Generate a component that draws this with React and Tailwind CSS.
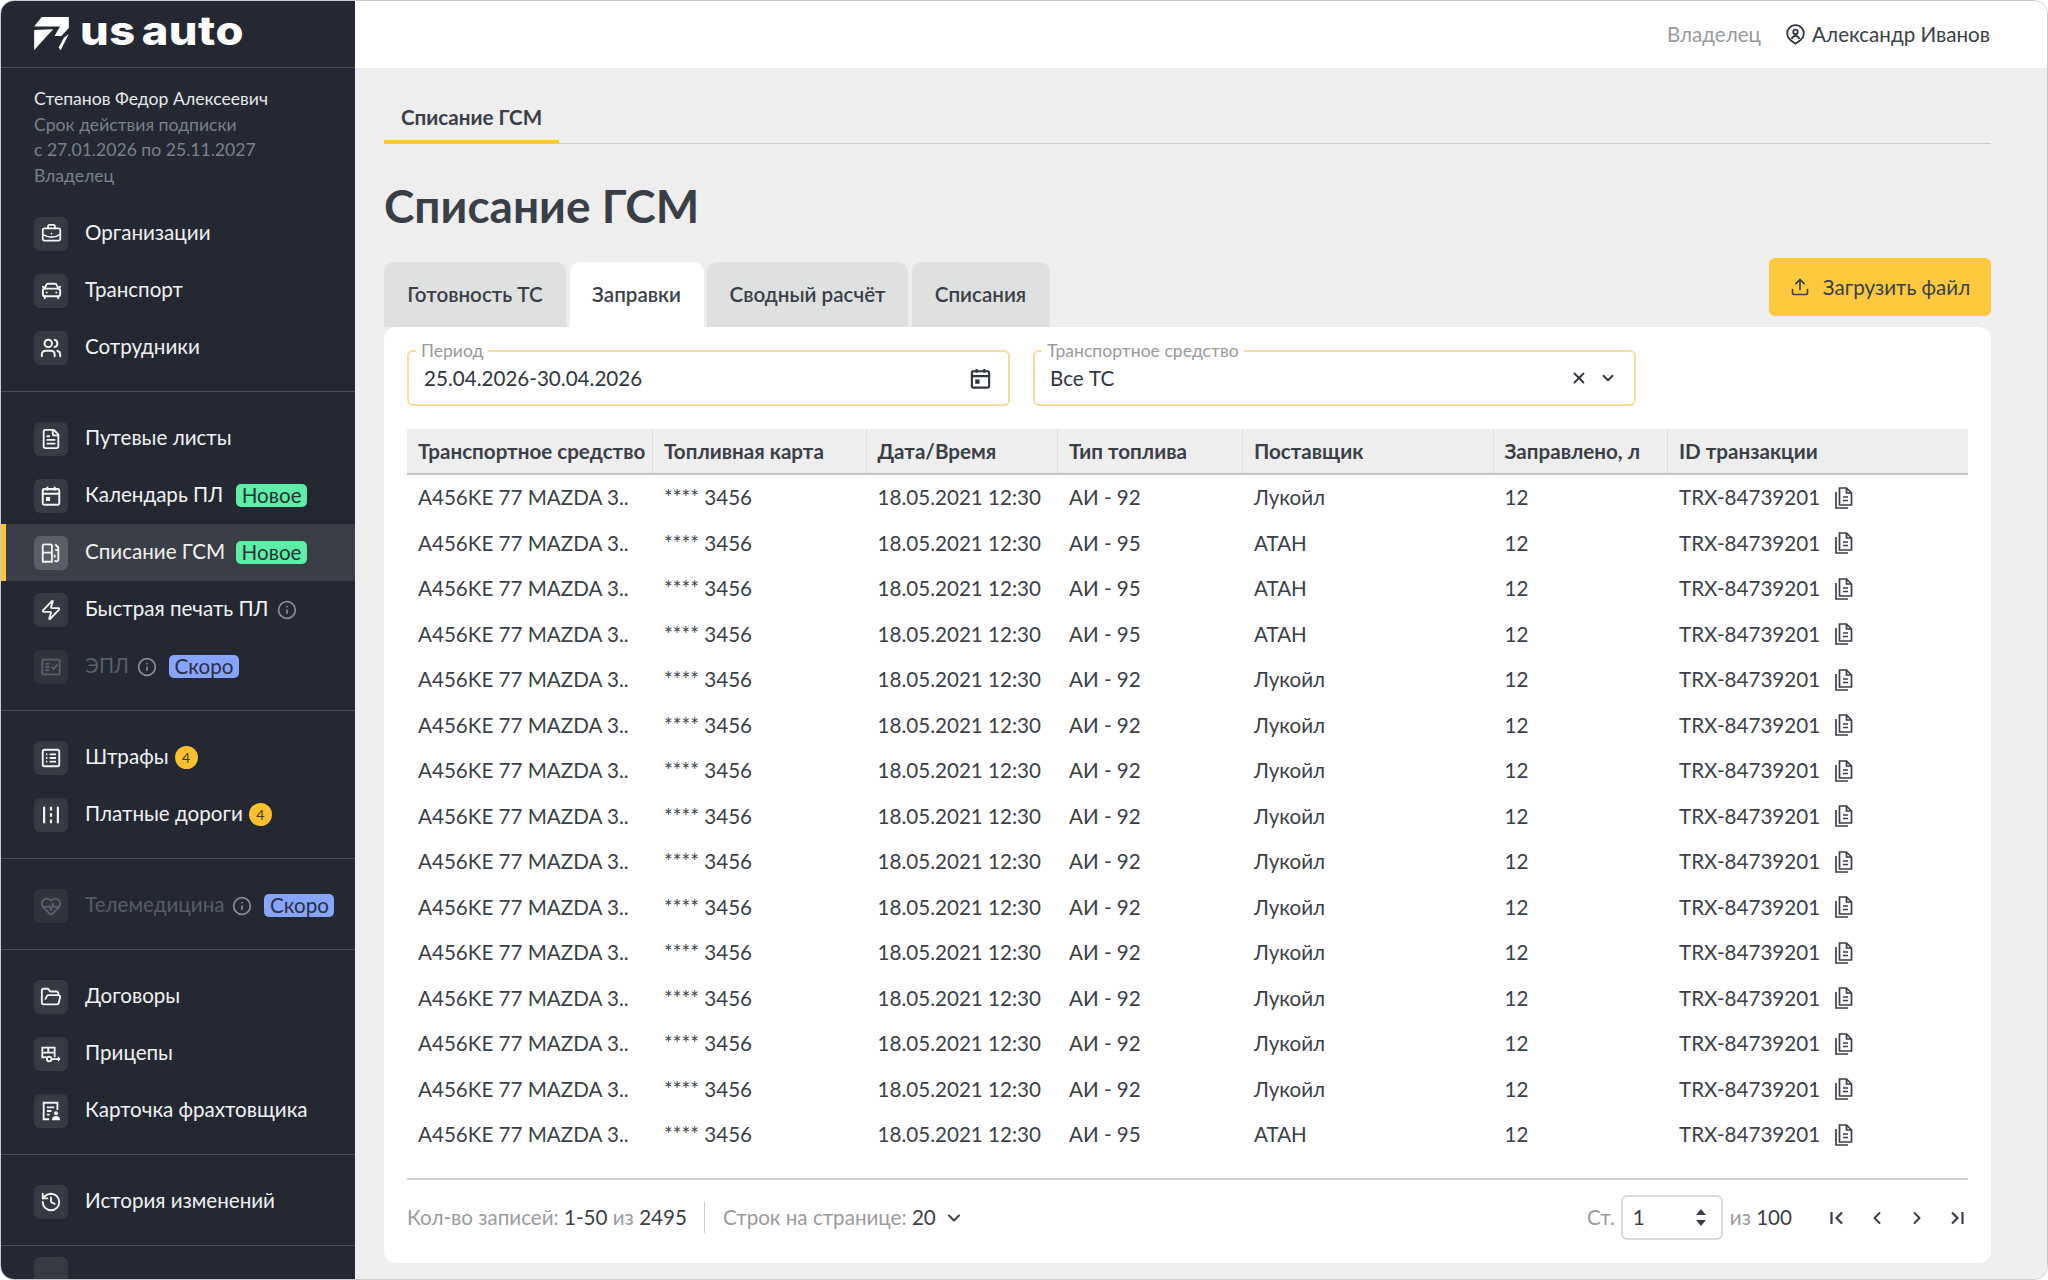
import {
  BriefcaseBusiness,
  CarFront,
  Users,
  FileText,
  Zap,
  HeartPulse,
  FolderOpen,
  History,
  Info,
  X,
  ChevronDown,
  ChevronLeft,
  ChevronRight,
  Upload,
} from "lucide-react";

const font = { fontFamily: '"Lato", "Noto Sans", sans-serif' };

const CalendarIcon = ({ className = "w-[22px] h-[22px]" }) => (
  <svg viewBox="0 0 24 24" className={className} fill="none" stroke="currentColor" strokeWidth="2.2">
    <rect x="3" y="4.5" width="18" height="17" rx="1.5" />
    <path d="M3 9.5h18M8 2v4M16 2v4" />
    <rect x="6.5" y="13" width="4.5" height="4.5" fill="currentColor" stroke="none" />
  </svg>
);

const FuelIcon = () => (
  <svg viewBox="0 0 24 24" className="w-[22px] h-[22px]" fill="none" stroke="currentColor" strokeWidth="2">
    <path d="M3 21.5V4a1.500 1.500 0 0 1 1.500-1.500h7A1.500 1.500 0 0 1 13 4v17.500zM3 11.500h10" />
    <path d="M16.500 2.500l3.500 3.500v13a2.200 2.200 0 0 1-4 1.200M16.500 8.500H20M16 14v3" />
  </svg>
);

const EplIcon = () => (
  <svg viewBox="0 0 24 24" className="w-[22px] h-[22px]" fill="none" stroke="currentColor" strokeWidth="2">
    <rect x="2.500" y="4" width="19" height="16" rx="1" />
    <path d="M6 8.500h4M6 12h4M6 15.500h4M13 12l2 2 4-4.500" />
  </svg>
);

const ListIcon = () => (
  <svg viewBox="0 0 24 24" className="w-[22px] h-[22px]" fill="none" stroke="currentColor" strokeWidth="2">
    <rect x="3" y="3" width="18" height="18" rx="2" />
    <path d="M10.500 8h7M10.500 12h7M10.500 16h7M6.500 8h1.500M6.500 12h1.500M6.500 16h1.500" />
  </svg>
);

const RoadIcon = () => (
  <svg viewBox="0 0 24 24" className="w-[22px] h-[22px]" fill="none" stroke="currentColor" strokeWidth="2.400">
    <path d="M4.500 3v18M19.500 3v18M12 3v4M12 10v4M12 17v4" />
  </svg>
);

const TrailerIcon = () => (
  <svg viewBox="0 0 24 24" className="w-[22px] h-[22px]" fill="none" stroke="currentColor" strokeWidth="2">
    <path d="M16 15.500V5H2.500v10.500H7M2.500 10.500H16M9 5v5.500" />
    <circle cx="10" cy="17.500" r="2.500" />
    <path d="M13 17.500h7" />
    <path d="M19.500 14.500l3 3-3 3z" fill="currentColor" stroke="none" />
  </svg>
);

const CardIcon = () => (
  <svg viewBox="0 0 24 24" className="w-[22px] h-[22px]" fill="none" stroke="currentColor" strokeWidth="2">
    <path d="M10 21H4V3h15v8M7.500 8h8M7.500 12h5M7.500 16h3" />
    <circle cx="17.500" cy="14.500" r="2.200" fill="currentColor" stroke="none" />
    <path d="M13 22c0-3 2-4.500 4.500-4.500S22 19 22 22z" fill="currentColor" stroke="none" />
  </svg>
);

const CopyIcon = () => (
  <svg viewBox="0 0 20 24" className="w-[21px] h-[24px] text-[#3a3f47]" fill="none" stroke="currentColor" strokeWidth="1.700">
    <path d="M6 2h7l5 5v12H6zM13 2v5h5" />
    <path d="M9.500 11h5M9.500 14.500h5" />
    <path d="M2.500 6v16h12" />
  </svg>
);

const PinUser = () => (
  <svg viewBox="0 0 24 24" className="w-[21px] h-[23px] text-[#2f343c]" fill="none" stroke="currentColor" strokeWidth="2">
    <path d="M12 22.500 6.500 18.500A9.500 9.500 0 1 1 17.500 18.500z" />
    <circle cx="12" cy="9" r="2.600" />
    <path d="M7.500 17c1-2.500 2.500-3.500 4.500-3.500s3.500 1 4.500 3.500" />
  </svg>
);

const FirstIcon = () => (
  <svg viewBox="0 0 20 20" className="w-5 h-5" fill="none" stroke="currentColor" strokeWidth="2.200">
    <path d="M4.500 4v12M15 4.500 9.500 10l5.500 5.500" />
  </svg>
);

const LastIcon = () => (
  <svg viewBox="0 0 20 20" className="w-5 h-5" fill="none" stroke="currentColor" strokeWidth="2.200">
    <path d="M15.500 4v12M5 4.500 10.500 10 5 15.500" />
  </svg>
);

const Logo = () => (
  <div className="flex items-center pl-[33px] h-full">
    <svg viewBox="0 0 102 100" className="w-[35px] h-[34px] shrink-0 text-white" fill="currentColor">
      <path d="M22 0H102V32L80 56H60L76 28H0z" />
      <path d="M0 38 56 36 12 84 0 98z" />
      <path d="M88 60 102 50 78 98 72 90z" />
    </svg>
    <span
      className="ml-[11px] text-white text-[40px] leading-none font-extrabold tracking-[0.5px] [word-spacing:-4px] -mt-[6px] scale-x-[1.13] origin-left"
      style={{ fontFamily: '"Inter", sans-serif' }}
    >
      us auto
    </span>
  </div>
);

const NewBadge = ({ ml = "ml-[13px]" }) => (
  <span className={`${ml} h-[23px] w-[71px] rounded-[5px] bg-[#5cefa6] text-[#2a3039] text-[20.6px] leading-[23px] text-center`}>
    Новое
  </span>
);

const SoonBadge = () => (
  <span className="ml-[12px] h-[23px] w-[70px] rounded-[5px] bg-[#85a5ff] text-[#2a3040] text-[20.6px] leading-[23px] text-center">
    Скоро
  </span>
);

const Count = () => (
  <span className="ml-[6px] w-[23px] h-[23px] rounded-full bg-[#fcc02e] text-[#3a3a2a] text-[14px] leading-[23px] text-center">
    4
  </span>
);

const NavItem = ({ icon, label, active, disabled, children }) => (
  <div
    className={`flex items-center h-[57px] ${
      active ? "bg-[#3a3f47] border-l-[5px] border-[#fcc537] pl-[28px]" : "pl-[33px]"
    }`}
  >
    <div
      className={`w-[34px] h-[34px] rounded-[6px] flex items-center justify-center shrink-0 ${
        disabled ? "text-[#5b606a] bg-[#2f343d]" : active ? "bg-[#5a5e65] text-[#f4f4f4]" : "bg-[#353a43] text-[#f4f4f4]"
      }`}
    >
      {icon}
    </div>
    <span className={`ml-[17px] -mt-[2px] text-[20.6px] leading-none ${disabled ? "text-[#585d67]" : "text-[#f2f2f2]"}`}>
      {label}
    </span>
    {children}
  </div>
);

const InfoMark = ({ ml = "ml-[8px]", color = "text-[#8a8e96]" }) => (
  <Info className={`${ml} w-[20px] h-[20px] ${color}`} strokeWidth={2} />
);

const Group = ({ children }) => (
  <div className="pt-[18px] pb-[15px] border-b border-[#4b505a]">{children}</div>
);

const Sidebar = () => (
  <aside className="w-[354px] shrink-0 bg-[#232833] flex flex-col overflow-hidden">
    <div className="h-[67px] border-b border-[#4b505a] shrink-0">
      <Logo />
    </div>
    <div className="pb-[15px] border-b border-[#4b505a] shrink-0">
      <div className="pt-[18px] pl-[33px] mb-[17px] text-[17.6px] leading-[25.5px] text-[#7c818a]">
        <div className="text-[#e8e9ea]">Степанов Федор Алексеевич</div>
        <div>Срок действия подписки</div>
        <div>с 27.01.2026 по 25.11.2027</div>
        <div>Владелец</div>
      </div>
      <NavItem icon={<BriefcaseBusiness size={21} strokeWidth={2} />} label="Организации" />
      <NavItem icon={<CarFront size={23} strokeWidth={2} />} label="Транспорт" />
      <NavItem icon={<Users size={22} strokeWidth={2.2} />} label="Сотрудники" />
    </div>
    <Group>
      <NavItem icon={<FileText size={22} strokeWidth={2} />} label="Путевые листы" />
      <NavItem icon={<CalendarIcon />} label="Календарь ПЛ">
        <NewBadge />
      </NavItem>
      <NavItem icon={<FuelIcon />} label="Списание ГСМ" active>
        <NewBadge ml="ml-[11px]" />
      </NavItem>
      <NavItem icon={<Zap size={22} strokeWidth={2} />} label="Быстрая печать ПЛ">
        <InfoMark />
      </NavItem>
      <NavItem icon={<EplIcon />} label="ЭПЛ" disabled>
        <InfoMark ml="ml-[8px]" />
        <SoonBadge />
      </NavItem>
    </Group>
    <Group>
      <NavItem icon={<ListIcon />} label="Штрафы">
        <Count />
      </NavItem>
      <NavItem icon={<RoadIcon />} label="Платные дороги">
        <Count />
      </NavItem>
    </Group>
    <Group>
      <NavItem icon={<HeartPulse size={22} strokeWidth={2} />} label="Телемедицина" disabled>
        <InfoMark ml="ml-[8px]" />
        <SoonBadge />
      </NavItem>
    </Group>
    <Group>
      <NavItem icon={<FolderOpen size={22} strokeWidth={2} />} label="Договоры" />
      <NavItem icon={<TrailerIcon />} label="Прицепы" />
      <NavItem icon={<CardIcon />} label="Карточка фрахтовщика" />
    </Group>
    <Group>
      <NavItem icon={<History size={22} strokeWidth={2} />} label="История изменений" />
    </Group>
    <div className="pt-[11px] pl-[33px]">
      <div className="w-[34px] h-[34px] rounded-[6px] bg-[#353a43]" />
    </div>
  </aside>
);

const columns = [
  "Транспортное средство",
  "Топливная карта",
  "Дата/Время",
  "Тип топлива",
  "Поставщик",
  "Заправлено, л",
  "ID транзакции",
];

const gridCols = "grid grid-cols-[245px_213.5px_191.5px_185px_250.5px_174.5px_301px]";

const fuels = [92, 95, 95, 95, 92, 92, 92, 92, 92, 92, 92, 92, 92, 92, 95];

const Field = ({ label, children }) => (
  <div className="relative w-[603px] h-[56px] rounded-[6px] border-2 border-[#f5dd9c] flex items-center pl-[15px] pr-[17px] text-[20.6px] text-[#30353d]">
    <span className="absolute left-[7px] -top-[11px] bg-white px-[5px] text-[17.6px] leading-[20px] text-[#9a9a9a]">
      {label}
    </span>
    {children}
  </div>
);

const Table = () => (
  <div className="mt-[23px]">
    <div className={`${gridCols} h-[46px] bg-[#eeeeee] border-b-2 border-[#c3c5c7] text-[20.6px] font-bold text-[#3a3f47]`}>
      {columns.map((c, i) => (
        <div key={c} className={`flex items-center pl-[11px] whitespace-nowrap ${i > 0 ? "border-l border-[#dddddd]" : ""}`}>
          {c}
        </div>
      ))}
    </div>
    {fuels.map((f, i) => (
      <div key={i} className={`${gridCols} h-[45.5px] items-center text-[20.6px] text-[#3a3f47]`}>
        <div className="pl-[11px] whitespace-nowrap">A456KE 77 MAZDA 3..</div>
        <div className="pl-[12px]">**** 3456</div>
        <div className="pl-[12px]">18.05.2021 12:30</div>
        <div className="pl-[12px]">АИ - {f}</div>
        <div className="pl-[12px]">{f === 92 ? "Лукойл" : "АТАН"}</div>
        <div className="pl-[12px]">12</div>
        <div className="pl-[12px] flex items-center gap-[13px]">
          TRX-84739201
          <CopyIcon />
        </div>
      </div>
    ))}
  </div>
);

const Footer = () => (
  <div className="mt-[20px] border-t-2 border-[#d3d5d6] h-[62px] pt-[16px] flex items-center justify-between text-[20.6px] text-[#9b9b9b]">
    <div className="flex items-center">
      <span>
        Кол-во записей: <span className="text-[#3a3f47]">1-50</span> из <span className="text-[#3a3f47]">2495</span>
      </span>
      <div className="w-px h-[31px] bg-[#cfcfcf] ml-[17px] mr-[18px]" />
      <span>
        Строк на странице: <span className="text-[#3a3f47]">20</span>
      </span>
      <ChevronDown className="ml-[8px] text-[#3a3f47]" size={20} strokeWidth={2.4} />
    </div>
    <div className="flex items-center">
      <span>Ст.</span>
      <div className="ml-[6px] w-[102px] h-[45px] rounded-[6px] border-2 border-[#d8d8d8] flex items-center justify-between pl-[10px] pr-[15px] text-[#3a3f47]">
        1
        <div className="flex flex-col gap-[5px]">
          <span className="w-0 h-0 border-x-[5px] border-b-[6px] border-x-transparent border-b-[#3a3f47]" />
          <span className="w-0 h-0 border-x-[5px] border-t-[6px] border-x-transparent border-t-[#3a3f47]" />
        </div>
      </div>
      <span className="ml-[7px]">
        из <span className="text-[#3a3f47]">100</span>
      </span>
      <div className="ml-[35px] mr-[1px] flex items-center gap-[20px] text-[#3a3f47]">
        <FirstIcon />
        <ChevronLeft size={20} strokeWidth={2.4} />
        <ChevronRight size={20} strokeWidth={2.4} />
        <LastIcon />
      </div>
    </div>
  </div>
);

export default function App() {
  return (
    <div style={font} className="w-[2048px] h-[1280px] bg-white">
      <div className="w-full h-full box-border border border-[#c8cacc] rounded-[14px] overflow-hidden flex">
        <Sidebar />
        <main className="flex-1 min-w-0 bg-[#eeeeee] flex flex-col">
          <header className="h-[67px] shrink-0 bg-white flex items-center justify-end pr-[57px] pb-[1px] text-[20.6px] text-[#3a3f47]">
            <span className="text-[#9a9a9a]">Владелец</span>
            <span className="ml-[24px]">
              <PinUser />
            </span>
            <span className="ml-[6px]">Александр Иванов</span>
          </header>
          <div className="pl-[29px] pr-[56px] flex-1 flex flex-col">
            <div className="h-[76px] border-b-[1.5px] border-[#c8c8c8] flex items-end">
              <div className="h-[49px] w-[175px] pl-[17px] pt-[7px] border-b-[4px] border-[#fcc537] text-[20.6px] font-bold text-[#3a3f47] -mb-px">
                Списание ГСМ
              </div>
            </div>
            <h1 className="mt-[37px] h-[50px] text-[46px] leading-[50px] font-bold text-[#3a3f47]">Списание ГСМ</h1>
            <div className="mt-[27px] h-[69px] flex justify-between">
              <div className="flex self-end gap-[3.5px] text-[20.6px] font-semibold text-[#3a3f47]">
                <div className="h-[65px] w-[182px] rounded-t-[10px] bg-[#dfe1e1] flex items-center justify-center">Готовность ТС</div>
                <div className="h-[65px] w-[134px] rounded-t-[10px] bg-white flex items-center justify-center">Заправки</div>
                <div className="h-[65px] w-[201px] rounded-t-[10px] bg-[#dfe1e1] flex items-center justify-center">Сводный расчёт</div>
                <div className="h-[65px] w-[138px] rounded-t-[10px] bg-[#dfe1e1] flex items-center justify-center">Списания</div>
              </div>
              <button className="w-[222px] h-[58px] rounded-[6px] bg-[#fec93f] flex items-center justify-center gap-[13px] text-[20.6px] text-[#3a3f47]">
                <Upload size={20} strokeWidth={2} />
                Загрузить файл
              </button>
            </div>
            <section className="h-[936px] bg-white rounded-[12px] px-[23px] pt-[23px]">
              <div className="flex gap-[23px]">
                <Field label="Период">
                  <span className="flex-1">25.04.2026-30.04.2026</span>
                  <CalendarIcon className="w-[23px] h-[23px] -mr-[1px]" />
                </Field>
                <Field label="Транспортное средство">
                  <span className="flex-1">Все ТС</span>
                  <X size={18} strokeWidth={2.4} />
                  <ChevronDown className="ml-[11px]" size={18} strokeWidth={2.4} />
                </Field>
              </div>
              <Table />
              <Footer />
            </section>
          </div>
        </main>
      </div>
    </div>
  );
}
